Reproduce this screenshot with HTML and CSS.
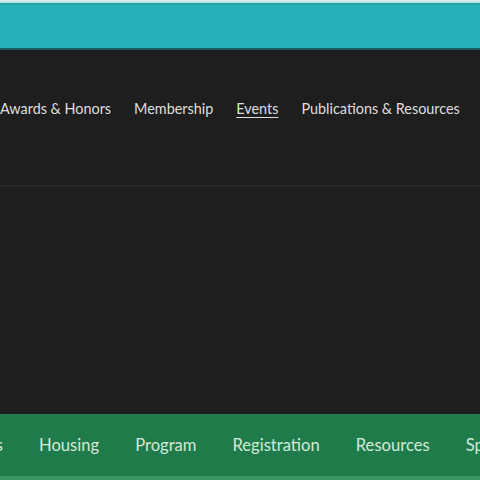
FILE: index.html
```html
<!DOCTYPE html>
<html>
<head>
<meta charset="utf-8">
<link rel="stylesheet" href="styles.css">
</head>
<body>
<div class="page">
  <div class="topline"></div>
  <div class="teal"></div>
  <div class="tealshadow"></div>
  <div class="dark">
    <nav class="mainnav">
      <a class="item">Awards &amp; Honors</a>
      <a class="item">Membership</a>
      <a class="item current">Events</a>
      <a class="item">Publications &amp; Resources</a>
    </nav>
    <div class="divider"></div>
    <div class="space"></div>
  </div>
  <nav class="subnav">
    <a class="sub cut">Dates</a>
    <a class="sub">Housing</a>
    <a class="sub">Program</a>
    <a class="sub">Registration</a>
    <a class="sub">Resources</a>
    <a class="sub">Sponsors</a>
  </nav>
  <div class="greenline"></div>
</div>
</body>
</html>
```
FILE: styles.css
```css
html, body { margin: 0; padding: 0; }
body { background: #1e1e1e; font-family: Lato, "Open Sans", sans-serif; width: 480px; height: 480px; overflow: hidden; }
.page { display: flex; flex-direction: column; height: 480px; }
.topline { height: 3px; background: linear-gradient(#e6f3f3, #a8d8da); }
.teal { height: 45px; background: #26b1ba; border-top: 2px solid #23a2aa; box-sizing: border-box; }
.tealshadow { height: 2px; background: #1c5a5e; }
.dark { flex: 1; display: flex; flex-direction: column; background: #1e1e1e; }
.mainnav { display: flex; gap: 23px; height: 135px; box-sizing: border-box; padding-top: 50px; align-items: flex-start; white-space: nowrap; overflow: hidden; }
.item { color: #dedede; font-size: 14.4px; line-height: 18px; flex: none; }
.current { text-decoration: underline; text-underline-offset: 3px; }
.divider { height: 2px; background: #292929; }
.space { flex: 1; }
.subnav { height: 62px; background: #1f7c4a; display: flex; gap: 36px; align-items: center; white-space: nowrap; overflow: hidden; }
.sub { color: #d2e9d9; font-size: 16.6px; flex: none; }
.cut { width: 60px; margin-left: -57px; text-align: right; }
.greenline { height: 4px; background: #3a9563; }
```
